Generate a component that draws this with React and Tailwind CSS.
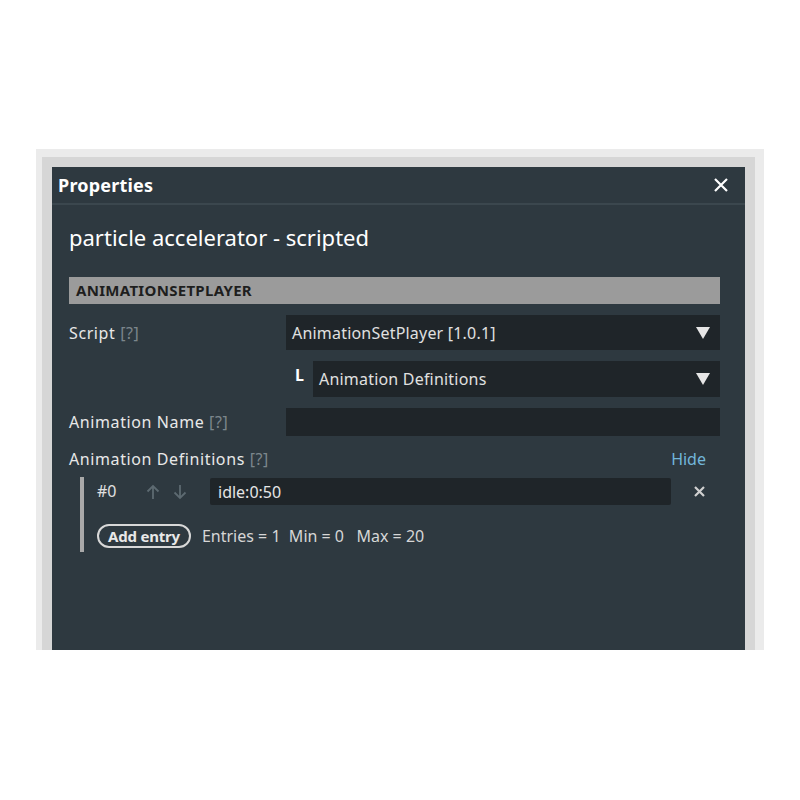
import React from "react";

const Tri = () => (
  <svg width="14" height="12" viewBox="0 0 14 12"><path d="M0 0 H14 L7 12 Z" fill="#e6e6e6" /></svg>
);

const ArrowUp = () => (
  <svg width="14" height="16" viewBox="0 0 14 16"><path d="M7 15 V2 M1.5 7.5 L7 2 L12.5 7.5" stroke="#5d6a71" strokeWidth="1.8" fill="none" /></svg>
);
const ArrowDown = () => (
  <svg width="14" height="16" viewBox="0 0 14 16"><path d="M7 1 V14 M1.5 8.5 L7 14 L12.5 8.5" stroke="#5d6a71" strokeWidth="1.8" fill="none" /></svg>
);

export default function App() {
  return (
    <div className="w-[800px] h-[800px] bg-white pt-[149px] pl-[36px]" style={{ fontFamily: '"Noto Sans", sans-serif' }}>
      <div className="w-[728px] h-[501px] bg-[#ebebeb] pt-[8px] pl-[6px]">
        <div className="w-[713px] h-[493px] bg-[#d6d6d6] pt-[10px] pl-[10px]">
          <div className="w-[693px] h-[483px] bg-[#2e3940] flex flex-col">
            <div className="h-[38px] flex items-center justify-between pl-[6px] pr-[16px] border-b-2 border-[#3b474e]">
              <span className="text-[18px] font-bold text-white tracking-[0.2px]">Properties</span>
              <svg width="16" height="16" viewBox="0 0 16 16"><path d="M2 2 L14 14 M14 2 L2 14" stroke="#fff" strokeWidth="2.2" /></svg>
            </div>
            <div className="pl-[17px] pr-[25px] pt-[17px]">
              <div className="text-[22px] text-white leading-[30px]">particle accelerator - scripted</div>
              <div className="mt-[25px] h-[27px] bg-[#9b9b9b] flex items-center pl-[7px] text-[15px] font-bold text-[#1e1e1e] tracking-[0.3px]">ANIMATIONSETPLAYER</div>
              <div className="mt-[11px] flex items-center">
                <div className="w-[217px] text-[16px] text-[#e8e8e8] tracking-[0.6px]">Script <span className="text-[#7c868c]">[?]</span></div>
                <div className="flex-1 h-[35px] bg-[#1f2529] flex items-center justify-between pl-[6px] pr-[10px] text-[16px] text-[#e0e0e0] tracking-[0.2px]">
                  <span>AnimationSetPlayer [1.0.1]</span><Tri />
                </div>
              </div>
              <div className="mt-[11px] flex items-center">
                <div className="w-[244px] flex justify-end pr-[9px] -mt-[8px]">
                  <span className="text-[16px] font-bold text-white">L</span>
                </div>
                <div className="flex-1 h-[36px] bg-[#1f2529] flex items-center justify-between pl-[6px] pr-[10px] text-[16px] text-[#e0e0e0] tracking-[0.2px]">
                  <span>Animation Definitions</span><Tri />
                </div>
              </div>
              <div className="mt-[11px] flex items-center">
                <div className="w-[217px] text-[16px] text-[#e8e8e8] tracking-[0.6px]">Animation Name <span className="text-[#7c868c]">[?]</span></div>
                <div className="flex-1 h-[28px] bg-[#1f2529]" />
              </div>
              <div className="mt-[11px] flex items-center justify-between">
                <div className="text-[16px] text-[#e8e8e8] tracking-[0.6px]">Animation Definitions <span className="text-[#7c868c]">[?]</span></div>
                <span className="text-[16px] text-[#72b6da] pr-[14px]">Hide</span>
              </div>
              <div className="mt-[6px] ml-[11px] flex">
                <div className="w-[4px] h-[75px] bg-[#a9a9a9]" />
                <div className="flex-1 flex flex-col pl-[13px] pt-[1px]">
                  <div className="flex items-center h-[27px]">
                    <span className="w-[49px] text-[16px] text-[#e0e0e0] -mt-[2px]">#0</span>
                    <ArrowUp />
                    <span className="w-[13px]" />
                    <ArrowDown />
                    <span className="w-[23px]" />
                    <div className="w-[461px] h-[27px] bg-[#1f2529] rounded-[2px] flex items-center pl-[8px] text-[16px] text-[#e6e6e6]">idle:0:50</div>
                    <svg className="ml-[23px]" width="11" height="11" viewBox="0 0 11 11"><path d="M1 1 L10 10 M10 1 L1 10" stroke="#d0d0d0" strokeWidth="2.2" /></svg>
                  </div>
                  <div className="mt-[19px] flex items-center">
                    <div className="h-[24px] px-[9px] border-2 border-[#d8d8d8] rounded-full flex items-center text-[15px] font-bold text-[#e8e8e8] tracking-[-0.2px]">Add entry</div>
                    <span className="ml-[11px] text-[16px] text-[#d6d6d6] whitespace-pre">Entries = 1  Min = 0   Max = 20</span>
                  </div>
                </div>
              </div>
            </div>
          </div>
        </div>
      </div>
    </div>
  );
}
